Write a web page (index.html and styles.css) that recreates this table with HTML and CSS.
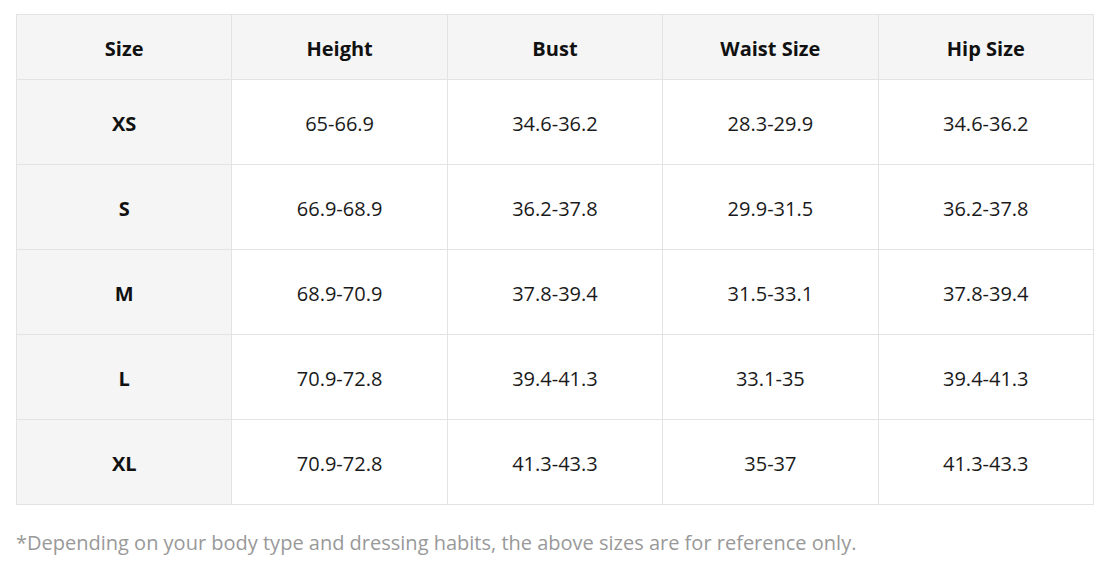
FILE: index.html
```html
<!DOCTYPE html>
<html lang="en">
<head>
<meta charset="utf-8">
<link rel="stylesheet" href="styles.css">
</head>
<body>
<div class="wrap">
<table class="chart">
<thead>
<tr><th>Size</th><th>Height</th><th>Bust</th><th>Waist Size</th><th>Hip Size</th></tr>
</thead>
<tbody>
<tr><th>XS</th><td>65-66.9</td><td>34.6-36.2</td><td>28.3-29.9</td><td>34.6-36.2</td></tr>
<tr><th>S</th><td>66.9-68.9</td><td>36.2-37.8</td><td>29.9-31.5</td><td>36.2-37.8</td></tr>
<tr><th>M</th><td>68.9-70.9</td><td>37.8-39.4</td><td>31.5-33.1</td><td>37.8-39.4</td></tr>
<tr><th>L</th><td>70.9-72.8</td><td>39.4-41.3</td><td>33.1-35</td><td>39.4-41.3</td></tr>
<tr><th>XL</th><td>70.9-72.8</td><td>41.3-43.3</td><td>35-37</td><td>41.3-43.3</td></tr>
</tbody>
</table>
<p class="note">*Depending on your body type and dressing habits, the above sizes are for reference only.</p>
</div>
</body>
</html>
```
FILE: styles.css
```css
html, body {
  margin: 0;
  padding: 0;
  background: #fff;
}
body {
  font-family: "Open Sans", "Noto Sans", "Liberation Sans", sans-serif;
  color: #111;
}
.wrap {
  padding: 14px 18px 0 16px;
}
.chart {
  width: 1078px;
  border-collapse: collapse;
  table-layout: fixed;
}
.chart th, .chart td {
  border: 1px solid #e3e3e3;
  text-align: center;
  font-size: 20px;
  padding: 2px 0 0 0;
}
.chart thead th {
  height: 62px;
  background: #f5f5f5;
  font-weight: 700;
}
.chart tbody th {
  background: #f5f5f5;
  font-weight: 700;
}
.chart tbody td, .chart tbody th {
  height: 82px;
}
.chart tbody td {
  font-weight: 400;
  color: #1a1a1a;
}
.note {
  margin: 24px 0 0 0;
  font-size: 20px;
  color: #999;
}
```
